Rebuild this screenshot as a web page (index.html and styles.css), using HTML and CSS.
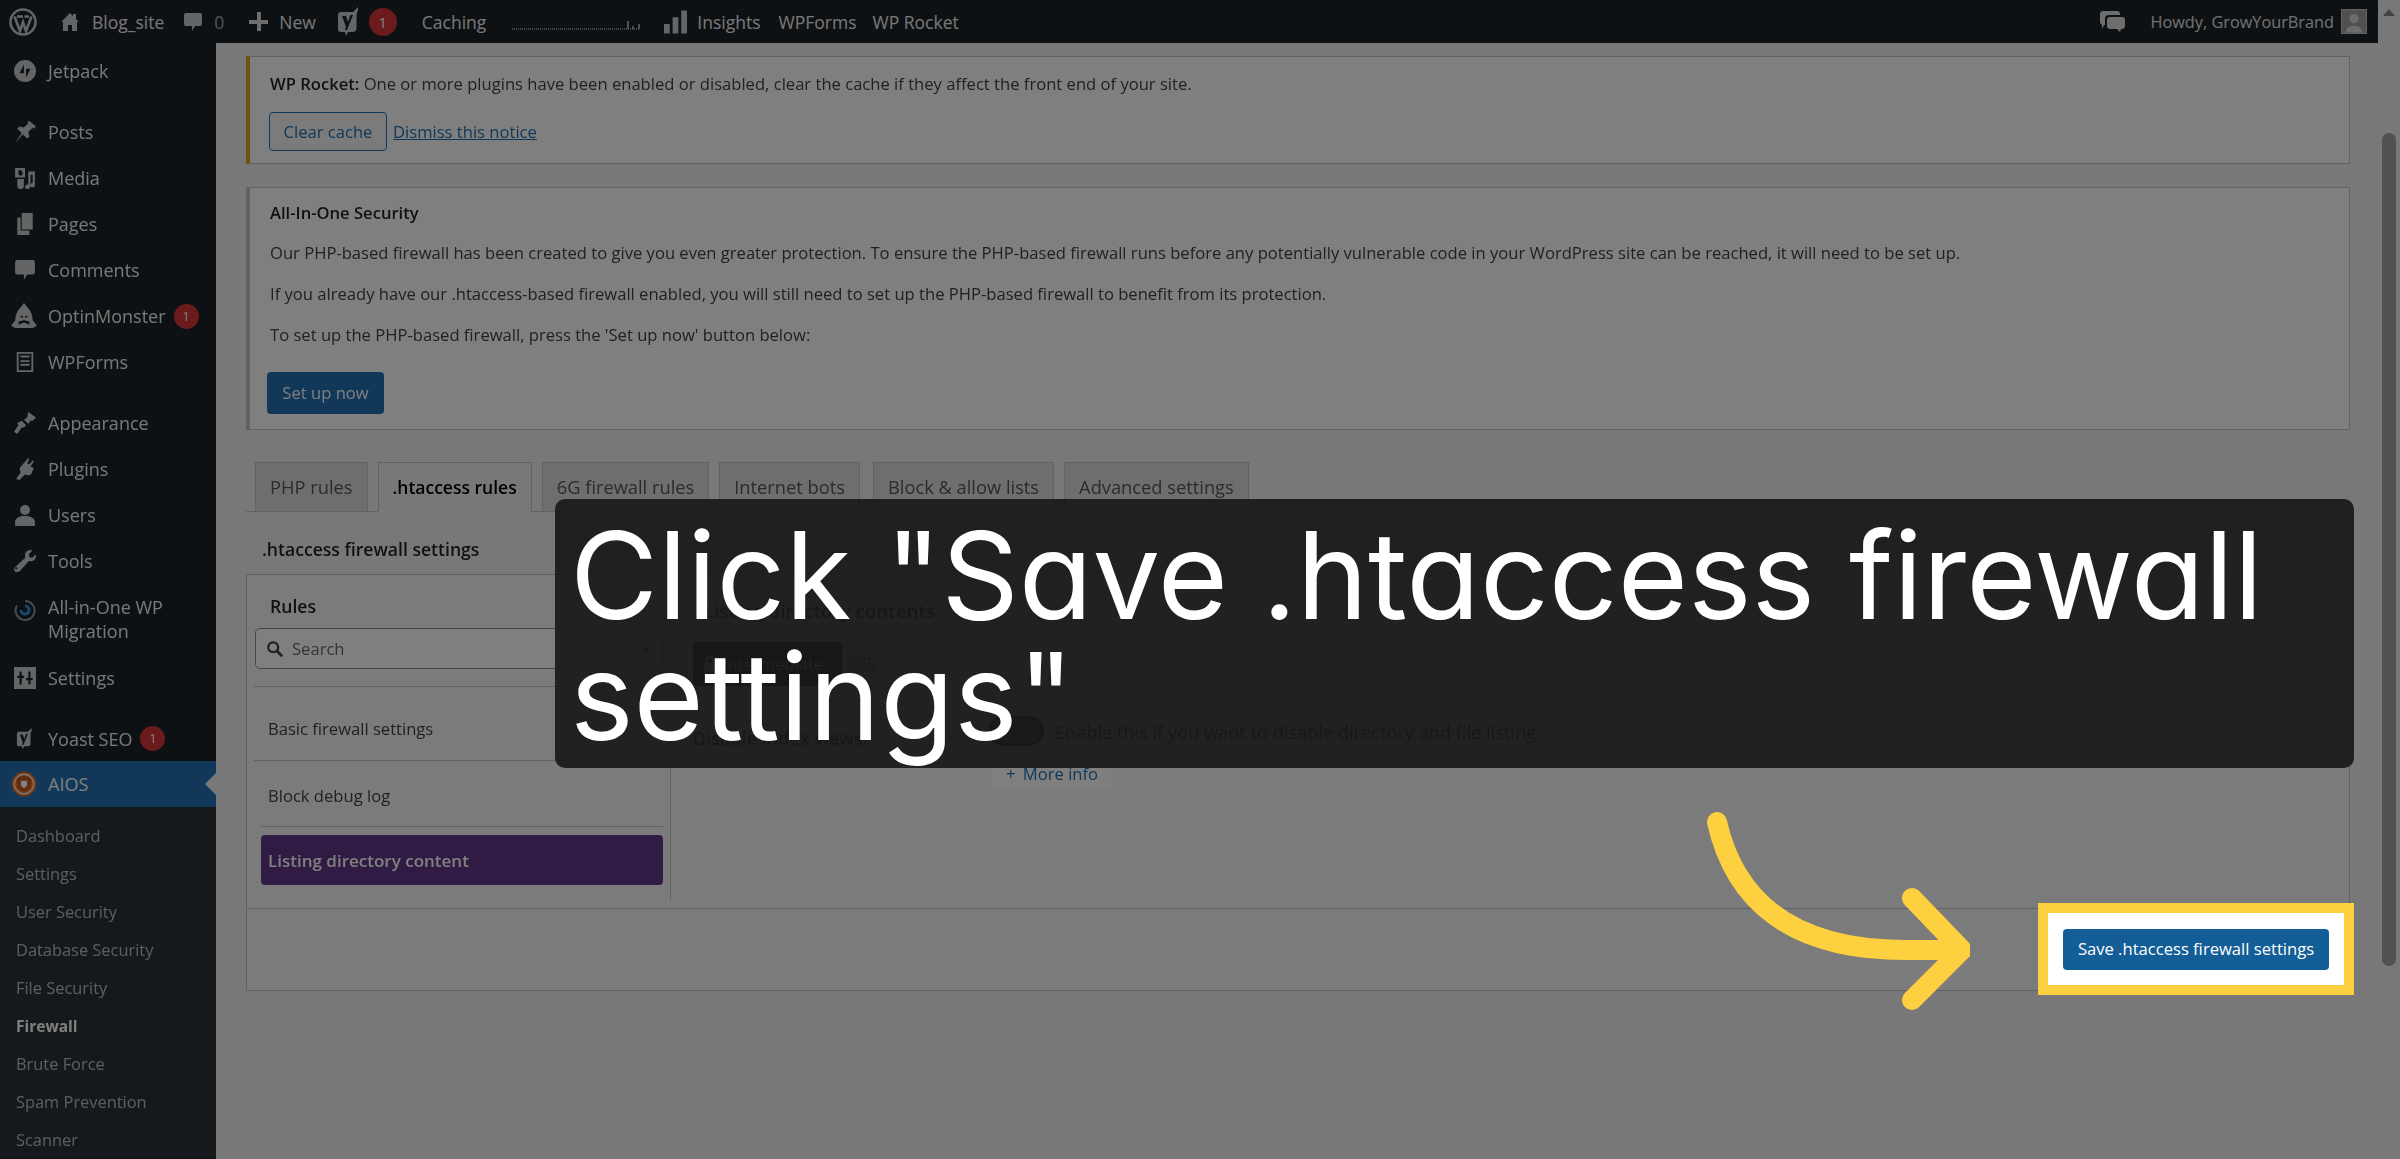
FILE: index.html
```html
<!DOCTYPE html>
<html lang="en">
<head>
  <meta charset="UTF-8">
  <title>Firewall ‹ Blog_site — WordPress</title>
  <link rel="stylesheet" href="styles.css">
</head>
<body>
  <svg class="defs" width="0" height="0">
    <symbol id="i-wp" viewBox="0 0 28 28"><circle cx="14" cy="14" r="12.500" fill="none" stroke="currentColor" stroke-width="2.500"/><path d="M5.500 8.500L11 23l3-9 3 9 5.500-14.500M8 8.500h6M15.500 8.500H20" fill="none" stroke="currentColor" stroke-width="2.600"/></symbol>
    <symbol id="i-home" viewBox="0 0 20 20"><path d="M10 1l3 3V2h3v5l3 3h-2v9h-5v-6H8v6H3v-9H1z"/></symbol>
    <symbol id="i-bubble" viewBox="0 0 20 20"><path d="M3 1h14a2 2 0 0 1 2 2v9a2 2 0 0 1-2 2h-5l-3 5v-5H3a2 2 0 0 1-2-2V3a2 2 0 0 1 2-2z"/></symbol>
    <symbol id="i-yoast" viewBox="0 0 24 30"><path fill-rule="evenodd" d="M4 5h12l5-5v3.500L19.500 8v13a4 4 0 0 1-4 4H11l-2 4-1-4H4a3 3 0 0 1-3-3V8a3 3 0 0 1 3-3zm1 4l4 11-1 3h2l6-15h-2.500L11 15 9 9z"/></symbol>
    <symbol id="i-jetpack" viewBox="0 0 20 20"><path fill-rule="evenodd" d="M10 0a10 10 0 1 0 0 20 10 10 0 0 0 0-20zM9 4v8H5zm2 12V8h4z"/></symbol>
    <symbol id="i-pin" viewBox="0 0 20 20"><path d="M14 0l6 5-2 2-1-1-4 4 1 4-2 2-4-4-7 8 6-9-4-4 2-2 4 1 4-4-1-1z"/></symbol>
    <symbol id="i-media" viewBox="0 0 20 20"><path fill-rule="evenodd" d="M1 1h9v8.500H1zm3 2v2.800a2 2 0 1 0 3-1.700V3zM13 4h6v12.500a2 2 0 1 1-2-2V7h-2v11a2.500 2 0 1 1-2-2zM3 11h6v6a2.500 2.500 0 1 1-6 0z"/></symbol>
    <symbol id="i-pages" viewBox="0 0 20 20"><path d="M7 0h10v15H7zM3 4h3v12h8v4H3z"/></symbol>
    <symbol id="i-monster" viewBox="0 0 24 24"><path fill-rule="evenodd" d="M12 0l4 5c3 3 4 8 4 11l4 5-4 2H4l-4-2 4-5c0-3 1-8 4-11zm-4 12l3 2v-2zm8 0l-3 2v-2zM7 17v3l5-2 5 2v-3l-5-1z"/></symbol>
    <symbol id="i-forms" viewBox="0 0 20 24"><path fill-rule="evenodd" d="M1 1h18v22H1zm2 2v18h14V3zm2 2h10v2H5zm0 5h10v2H5zm0 4h10v2H5z"/></symbol>
    <symbol id="i-brush" viewBox="0 0 20 20"><path d="M13 0l7 5-3 3-2 0-2 3-4-4 3-2zM7 8l4 4-2 2-2 0-4 6-3-2 4-6-1-2z"/></symbol>
    <symbol id="i-plugin" viewBox="0 0 20 20"><path d="M13 0l1 1-2 4 2 1 3-4 1 1-3 5 3 1-2 5c-1 2-4 2-6 1l-5 5-3-1 4-6c-1-2-1-4 0-5z"/></symbol>
    <symbol id="i-user" viewBox="0 0 20 20"><circle cx="10" cy="5.500" r="4.500"/><path d="M1 20v-4c0-3 4-4 6-5h6c2 1 6 2 6 5v4z"/></symbol>
    <symbol id="i-wrench" viewBox="0 0 20 20"><path fill-rule="evenodd" d="M15 0c-3 0-5 2-5 5l.3 2L1 15.500a2.800 2.800 0 0 0 4 4L13.500 10l2 .2c3 0 4.500-2.500 4.500-5.200l-.3-1L16.500 7 14 6.500 13.500 4 16.800.3zM3 16.500a1 1 0 1 0 0 .1z"/></symbol>
    <symbol id="i-settings" viewBox="0 0 20 20"><path fill-rule="evenodd" d="M0 0h20v20H0zm5 4v4H3v2h2v6h2v-6h2V8H7V4zm8 0v6h-2v2h2v4h2v-4h2v-2h-2V4z"/></symbol>
    <symbol id="i-chat" viewBox="0 0 26 22"><path d="M4 0h14a3 3 0 0 1 3 3v1H10a4 4 0 0 0-4 4v6H5l-2 4v-4.300A3 3 0 0 1 1 11V3a3 3 0 0 1 3-3z"/><path d="M11 6h12a3 3 0 0 1 3 3v6a3 3 0 0 1-3 3h-1l-1 3-3-3h-7a3 3 0 0 1-3-3V9a3 3 0 0 1 3-3z"/></symbol>
  </svg>

  <div class="page">
    <div class="app">
      <header class="topbar">
        <svg class="tb-logo"><use href="#i-wp"/></svg>
        <a class="tb-item tb-home"><svg class="tb-ico"><use href="#i-home"/></svg>Blog_site</a>
        <a class="tb-item tb-comments"><svg class="tb-ico"><use href="#i-bubble"/></svg><span class="muted">0</span></a>
        <a class="tb-item tb-new"><span class="tb-plus"></span>New</a>
        <a class="tb-item tb-yoast"><svg class="tb-ico tb-ico--tall"><use href="#i-yoast"/></svg><span class="badge badge--tb">1</span></a>
        <a class="tb-item tb-caching">Caching</a>
        <svg class="tb-spark" width="128" height="14" viewBox="0 0 128 14">
          <line x1="0" y1="11" x2="128" y2="11" stroke="#b5b5b5" stroke-width="1.500" stroke-dasharray="1 1"/>
          <path d="M116 11V3M121 11V8M127 11V6" stroke="#c8c8c8" stroke-width="1.500"/>
        </svg>
        <a class="tb-item tb-insights">
          <svg class="tb-ico" viewBox="0 0 24 24"><path d="M0 14h6v10H0zM9 7h6v17H9zM18 0h6v24h-6z"/></svg>Insights
        </a>
        <a class="tb-item tb-wpforms">WPForms</a>
        <a class="tb-item tb-rocket">WP Rocket</a>
        <div class="tb-right">
          <svg class="tb-chat"><use href="#i-chat"/></svg>
          <span class="tb-howdy">Howdy, GrowYourBrand</span>
          <span class="tb-avatar">
            <svg viewBox="0 0 26 24"><circle cx="13" cy="9" r="5"/><path d="M4 24c0-5 4-7 9-7s9 2 9 7z"/></svg>
          </span>
        </div>
      </header>

      <div class="layout">
        <nav class="sidebar">
          <ul class="menu">
            <li class="menu__item menu__item--first"><svg class="menu__ico"><use href="#i-jetpack"/></svg>Jetpack</li>
            <li class="menu__sep"></li>
            <li class="menu__item"><svg class="menu__ico"><use href="#i-pin"/></svg>Posts</li>
            <li class="menu__item"><svg class="menu__ico"><use href="#i-media"/></svg>Media</li>
            <li class="menu__item"><svg class="menu__ico"><use href="#i-pages"/></svg>Pages</li>
            <li class="menu__item"><svg class="menu__ico"><use href="#i-bubble"/></svg>Comments</li>
            <li class="menu__item"><svg class="menu__ico menu__ico--wide"><use href="#i-monster"/></svg>OptinMonster<span class="badge">1</span></li>
            <li class="menu__item"><svg class="menu__ico"><use href="#i-forms"/></svg>WPForms</li>
            <li class="menu__sep"></li>
            <li class="menu__item"><svg class="menu__ico"><use href="#i-brush"/></svg>Appearance</li>
            <li class="menu__item"><svg class="menu__ico"><use href="#i-plugin"/></svg>Plugins</li>
            <li class="menu__item"><svg class="menu__ico"><use href="#i-user"/></svg>Users</li>
            <li class="menu__item"><svg class="menu__ico"><use href="#i-wrench"/></svg>Tools</li>
            <li class="menu__item menu__item--two">
              <svg class="menu__ico menu__ico--top" viewBox="0 0 22 24">
                <path d="M11 3a9.500 9.500 0 1 1-8 4.500" fill="none" stroke="#8c9aa6" stroke-width="2"/>
                <path d="M11 8a4 4 0 1 1-4 4" fill="none" stroke="#2f8fd8" stroke-width="3"/>
              </svg>
              <span>All-in-One WP<br>Migration</span>
            </li>
            <li class="menu__item"><svg class="menu__ico"><use href="#i-settings"/></svg>Settings</li>
            <li class="menu__sep"></li>
            <li class="menu__item menu__item--tight"><svg class="menu__ico"><use href="#i-yoast"/></svg>Yoast SEO<span class="badge">1</span></li>
            <li class="menu__item menu__item--current">
              <svg class="menu__ico menu__ico--wide" viewBox="0 0 24 24">
                <circle cx="12" cy="12" r="11.500" fill="#e0702a"/>
                <circle cx="12" cy="12" r="9" fill="none" stroke="#fff" stroke-width="1.200"/>
                <path d="M6 7l6-2 6 2v5c0 4-3 6-6 7-3-1-6-3-6-7z" fill="#c2541a"/>
                <path d="M9 9h6v3c0 2-1.500 3-3 4-1.500-1-3-2-3-4z" fill="#fff"/>
              </svg>
              AIOS
            </li>
          </ul>
          <ul class="submenu">
            <li>Dashboard</li>
            <li>Settings</li>
            <li>User Security</li>
            <li>Database Security</li>
            <li>File Security</li>
            <li class="submenu__on">Firewall</li>
            <li>Brute Force</li>
            <li>Spam Prevention</li>
            <li>Scanner</li>
          </ul>
        </nav>

        <main class="content">
          <div class="notice notice--rocket">
            <p><b>WP Rocket:</b> One or more plugins have been enabled or disabled, clear the cache if they affect the front end of your site.</p>
            <div class="notice__actions">
              <a class="btn btn--outline">Clear cache</a>
              <a class="notice__link">Dismiss this notice</a>
            </div>
          </div>

          <div class="notice notice--aios">
            <p class="notice__title">All-In-One Security</p>
            <p>Our PHP-based firewall has been created to give you even greater protection. To ensure the PHP-based firewall runs before any potentially vulnerable code in your WordPress site can be reached, it will need to be set up.</p>
            <p>If you already have our .htaccess-based firewall enabled, you will still need to set up the PHP-based firewall to benefit from its protection.</p>
            <p>To set up the PHP-based firewall, press the 'Set up now' button below:</p>
            <a class="btn btn--primary">Set up now</a>
          </div>

          <div class="tabs">
            <a class="tab tab--php">PHP rules</a>
            <a class="tab tab--on">.htaccess rules</a>
            <a class="tab">6G firewall rules</a>
            <a class="tab">Internet bots</a>
            <a class="tab tab--block">Block &amp; allow lists</a>
            <a class="tab">Advanced settings</a>
          </div>

          <h2 class="section-title">.htaccess firewall settings</h2>

          <section class="box">
            <div class="box__main">
              <aside class="rules">
                <h3 class="rules__title">Rules</h3>
                <div class="search">
                  <svg class="search__ico" viewBox="0 0 20 20"><circle cx="8" cy="8" r="5.500" fill="none" stroke="currentColor" stroke-width="2.500"/><path d="M12 12l6 6" stroke="currentColor" stroke-width="3"/></svg>
                  <span class="search__text">Search</span>
                  <span class="search__x">✕</span>
                </div>
                <a class="rule rule--basic">Basic firewall settings</a>
                <a class="rule rule--debug">Block debug log</a>
                <a class="rule rule--on">Listing directory content</a>
              </aside>
              <div class="panel">
                <h3 class="panel__title">Listing directory contents</h3>
                <div class="level">
                  <span class="level__tag">
                    <svg viewBox="0 0 14 18"><path d="M1 8h12v10H1zM3 8V5a4 4 0 0 1 8 0v3H9V5a2 2 0 0 0-4 0v3z"/></svg>
                    Intermediate
                  </span>
                  <span class="level__score">0/5</span>
                </div>
                <div class="field">
                  <span class="field__label">Disable index views:</span>
                  <div class="field__body">
                    <div class="field__row">
                      <span class="toggle"></span>
                      <span class="field__help">Enable this if you want to disable directory and file listing.</span>
                    </div>
                    <a class="more"><span class="more__plus">+</span> More info</a>
                  </div>
                </div>
              </div>
            </div>
            <div class="box__foot"></div>
          </section>
        </main>
      </div>
    </div>

    <div class="scrollbar">
      <span class="scrollbar__up"></span>
      <span class="scrollbar__thumb"></span>
    </div>
  </div>

  <!-- walkthrough layer on top of the page -->
  <div class="spot"><a class="spot__btn">Save .htaccess firewall settings</a></div>
  <div class="callout">Click "Save .htaccess firewall settings"</div>
  <svg class="arrow" width="270" height="200" viewBox="0 0 270 200">
    <path d="M17 12C34 88 88 140 205 140H262M212 88L262 140L212 190" fill="none" stroke="#fdd03f" stroke-width="20" stroke-linecap="round" stroke-linejoin="round"/>
  </svg>
</body>
</html>
```

FILE: styles.css
```css
*,
*::before,
*::after {
  box-sizing: border-box;
}
html, body {
  margin: 0;
  padding: 0;
  height: 100%;
  overflow: hidden;
}
body {
  font-family: 'Open Sans', 'Noto Sans', sans-serif;
  font-size: 16.600px;
  line-height: 24px;
  color: #3c434a;
  background: #f0f0f1;
}
ul {
  list-style: none;
  margin: 0;
  padding: 0;
}
p, h2, h3 {
  margin: 0;
}
svg {
  fill: currentColor;
}
.defs {
  position: absolute;
}
.page {
  display: flex;
  height: 1159px;
  filter: blur(.5px);
}
.app {
  flex: 1;
  min-width: 0;
  display: flex;
  flex-direction: column;
}

/* top bar */
.topbar {
  display: flex;
  align-items: center;
  flex: 0 0 43px;
  height: 43px;
  padding-left: 9px;
  background: #1d2327;
  color: #f0f0f1;
  font-size: 17.500px;
}
.tb-logo {
  width: 28px;
  height: 28px;
  color: #c8cacc;
}
.tb-item {
  display: flex;
  align-items: center;
}
.tb-ico {
  width: 20px;
  height: 20px;
  color: #c8cacc;
}
.tb-ico--tall {
  width: 24px;
  height: 30px;
}
.tb-home { margin-left: 23px; }
.tb-home .tb-ico { margin-right: 12px; }
.tb-comments { margin-left: 19px; }
.tb-comments .tb-ico { margin-right: 11px; }
.muted { color: #a7aaad; }
.tb-new { margin-left: 25px; }
.tb-plus {
  width: 19px;
  height: 19px;
  margin-right: 11px;
  background:
    linear-gradient(#dcdcde, #dcdcde) center / 100% 4px no-repeat,
    linear-gradient(#dcdcde, #dcdcde) center / 4px 100% no-repeat;
}
.tb-yoast { margin-left: 21px; }
.tb-caching { margin-left: 25px; }
.tb-spark {
  margin: 6px 0 0 26px;
  color: #ccc;
}
.tb-insights { margin-left: 24px; }
.tb-insights .tb-ico {
  width: 23px;
  height: 24px;
  margin-right: 10px;
}
.tb-wpforms { margin-left: 18px; }
.tb-rocket { margin-left: 16px; }
.tb-right {
  display: flex;
  align-items: center;
  margin-left: auto;
  padding-right: 11px;
}
.tb-chat {
  width: 26px;
  height: 22px;
  color: #dcdcde;
  margin-right: 25px;
}
.tb-howdy {
  color: #e2e4e7;
  font-size: 16.300px;
}
.tb-avatar {
  display: block;
  width: 26px;
  height: 25px;
  margin-left: 7px;
  background: #a0a0a0;
  border: 1px solid #c4c4c4;
  color: #dadada;
}
.tb-avatar svg {
  display: block;
  width: 100%;
  height: 100%;
}

.badge {
  display: inline-block;
  width: 25px;
  height: 25px;
  margin-left: 6px;
  border-radius: 50%;
  background: #d63638;
  color: #fff;
  font-size: 13px;
  line-height: 25px;
  text-align: center;
}
.badge--tb {
  width: 28px;
  height: 28px;
  margin-left: 8px;
  line-height: 28px;
  font-size: 15px;
}

/* left menu */
.layout {
  flex: 1;
  display: flex;
  min-height: 0;
}
.sidebar {
  flex: 0 0 216px;
  background: #1d2327;
  color: #f0f0f1;
  font-size: 18px;
}
.menu__item {
  position: relative;
  display: flex;
  align-items: center;
  height: 46px;
  padding-left: 48px;
}
.menu__item--first {
  margin-top: 5px;
}
.menu__item--tight {
  height: 45px;
}
.menu__item--two {
  height: 71px;
  line-height: 24px;
  padding-bottom: 1px;
}
.menu__item--current {
  background: #2271b1;
  color: #fff;
}
.menu__item--current::after {
  content: "";
  position: absolute;
  right: 0;
  top: 12px;
  border: 11px solid transparent;
  border-right-color: #f0f0f1;
  border-left-width: 0;
}
.menu__sep {
  height: 15px;
}
.menu__ico {
  position: absolute;
  left: 14px;
  top: 12px;
  width: 22px;
  height: 22px;
  color: #c8cacc;
}
.menu__ico--wide {
  left: 11px;
  width: 26px;
  height: 26px;
  top: 10px;
}
.menu__ico--top {
  top: 13px;
  height: 26px;
}
.sidebar .badge {
  margin-left: 8px;
}
.submenu {
  height: 351px;
  padding-top: 10px;
  background: #2c3338;
  color: rgba(240, 246, 252, .7);
  font-size: 16.400px;
}
.submenu li {
  height: 38px;
  line-height: 38px;
  padding-left: 16px;
}
.submenu .submenu__on {
  color: #fff;
  font-weight: 700;
  font-size: 15.500px;
}

/* content */
.content {
  flex: 1;
  min-width: 0;
  padding: 13px 28px 0 30px;
}
.notice {
  background: #fff;
  border: 1px solid #c3c4c7;
  padding: 0 20px;
}
.notice b,
.notice__title {
  font-weight: 600;
  color: #1d2327;
}
.notice--rocket {
  height: 108px;
  padding-top: 15px;
  border-left: 4px solid #dba617;
}
.notice__actions {
  display: flex;
  align-items: center;
  margin-top: 16px;
}
.notice__link {
  margin-left: 6px;
  color: #2271b1;
  text-decoration: underline;
}
.btn {
  display: inline-flex;
  align-items: center;
  justify-content: center;
  border-radius: 4px;
}
.btn--outline {
  width: 118px;
  height: 39px;
  margin-left: -1px;
  border: 1px solid #2271b1;
  color: #2271b1;
  background: #f6f7f7;
}
.notice--aios {
  height: 243px;
  margin-top: 23px;
  padding-top: 13px;
  border-left: 4px solid #c3c4c7;
}
.notice--aios p {
  margin-bottom: 17px;
}
.notice--aios p.notice__title {
  margin-bottom: 16px;
}
.notice--aios p:nth-of-type(4) {
  margin-bottom: 25px;
}
.btn--primary {
  width: 117px;
  height: 42px;
  margin-left: -3px;
  background: #2271b1;
  color: #fff;
}

.tabs {
  display: flex;
  gap: 10px;
  height: 50px;
  margin-top: 32px;
  padding-left: 9px;
  border-bottom: 1px solid #c3c4c7;
}
.tab {
  display: flex;
  align-items: center;
  height: 50px;
  padding: 0 14px;
  border: 1px solid #c3c4c7;
  background: #dcdcde;
  color: #50575e;
  font-size: 18.300px;
  font-weight: 500;
}
.tab--on {
  background: #f0f0f1;
  border-bottom-color: #f0f0f1;
  color: #000;
  font-weight: 600;
  font-size: 17.500px;
}
.tab--block {
  margin-left: 3px;
}

.section-title {
  margin: 25px 0 13px 16px;
  height: 24px;
  font-size: 17.600px;
  line-height: 24px;
  font-weight: 600;
  color: #1d2327;
}

.box {
  height: 417px;
  background: #f6f6f6;
  border: 1px solid #c3c4c7;
}
.box__main {
  display: flex;
  height: 334px;
  border-bottom: 1px solid #c3c4c7;
  padding-bottom: 8px;
}
.rules {
  flex: 0 0 424px;
  padding: 19px 7px 0 8px;
  border-right: 1px solid #c3c4c7;
}
.rules__title {
  padding-left: 15px;
  font-size: 17.600px;
  line-height: 24px;
  font-weight: 600;
  color: #1d2327;
}
.search {
  display: flex;
  align-items: center;
  width: 408px;
  height: 41px;
  margin-top: 10px;
  padding: 0 10px;
  background: #fff;
  border: 1px solid #8c8f94;
  border-radius: 5px;
}
.search__ico {
  width: 18px;
  height: 18px;
  color: #3c434a;
}
.search__text {
  margin-left: 8px;
  color: #646970;
}
.search__x {
  margin-left: auto;
  font-size: 13px;
  color: #1d2327;
}
.rule {
  display: block;
  margin-left: 6px;
  padding-left: 7px;
  width: 402px;
}
.rule--basic {
  height: 75px;
  margin-top: 17px;
  margin-left: -1px;
  width: 409px;
  padding: 30px 0 0 14px;
  border-top: 1px solid #c3c4c7;
  border-bottom: 1px solid #c3c4c7;
}
.rule--debug {
  height: 66px;
  padding-top: 23px;
  border-bottom: 1px solid #c3c4c7;
}
.rule--on {
  height: 50px;
  margin-top: 8px;
  border-radius: 4px;
  background: #5e3688;
  color: #fff;
  font-weight: 600;
  font-size: 17px;
  line-height: 52px;
  padding-left: 7px;
}
.panel {
  flex: 1;
  padding: 24px 0 0 22px;
}
.panel__title {
  padding-left: 11px;
  font-size: 18.800px;
  line-height: 24px;
  font-weight: 600;
  color: #000;
}
.level {
  display: flex;
  align-items: center;
  width: 193px;
  height: 44px;
  margin-top: 19px;
  background: #e8e8e8;
}
.level__tag {
  display: flex;
  align-items: center;
  width: 149px;
  height: 44px;
  padding-left: 10px;
  background: #000;
  border-radius: 4px;
  color: #fff;
}
.level__tag svg {
  width: 14px;
  height: 18px;
  margin-right: 6px;
}
.level__score {
  margin-left: 9px;
}
.field {
  display: flex;
  margin-top: 30px;
  color: #000;
}
.field__label {
  flex: 0 0 295px;
  padding-top: 10px;
  font-weight: 600;
  font-size: 18px;
}
.field__row {
  display: flex;
}
.toggle {
  position: relative;
  flex: 0 0 56px;
  height: 30px;
  border-radius: 15px;
  background: #5e3688;
  border: 3px solid #1d2327;
}
.field__help {
  margin-left: 11px;
  padding-top: 4px;
  font-size: 18.200px;
}
.more {
  display: block;
  width: 119px;
  height: 33px;
  margin: 11px 0 0 4px;
  background: #ffffff;
  color: #2271b1;
  line-height: 33px;
  padding-left: 14px;
}
.more__plus {
  margin-right: 3px;
}

/* scrollbar */
.scrollbar {
  position: relative;
  flex: 0 0 22px;
  background: #f1f1f1;
}
.scrollbar__up {
  position: absolute;
  left: 5px;
  top: 9px;
  border: 6px solid transparent;
  border-top-width: 0;
  border-bottom: 7px solid #888;
}
.scrollbar__thumb {
  position: absolute;
  left: 4px;
  right: 4px;
  top: 133px;
  height: 833px;
  border-radius: 7px;
  background: #a3a3a3;
}

/* walkthrough layer */
.spot {
  position: absolute;
  left: 2038px;
  top: 903px;
  width: 316px;
  height: 92px;
  display: flex;
  align-items: center;
  justify-content: center;
  background: #fff;
  border: 10px solid #fdd03f;
  box-shadow: 0 0 0 3000px rgba(0, 0, 0, .5);
}
.spot__btn {
  display: flex;
  align-items: center;
  justify-content: center;
  width: 266px;
  height: 41px;
  border-radius: 4px;
  background: #135e96;
  color: #fff;
  font-size: 16.600px;
}
.callout {
  position: absolute;
  left: 555px;
  top: 499px;
  width: 1799px;
  height: 269px;
  padding: 16px 15px 0;
  border-radius: 10px;
  background: rgba(25, 25, 25, .92);
  color: #fff;
  font-family: Inter, 'Open Sans', sans-serif;
  font-feature-settings: "cv11" 1;
  font-size: 120.500px;
  line-height: 121px;
}
.arrow {
  position: absolute;
  left: 1700px;
  top: 810px;
}
```
